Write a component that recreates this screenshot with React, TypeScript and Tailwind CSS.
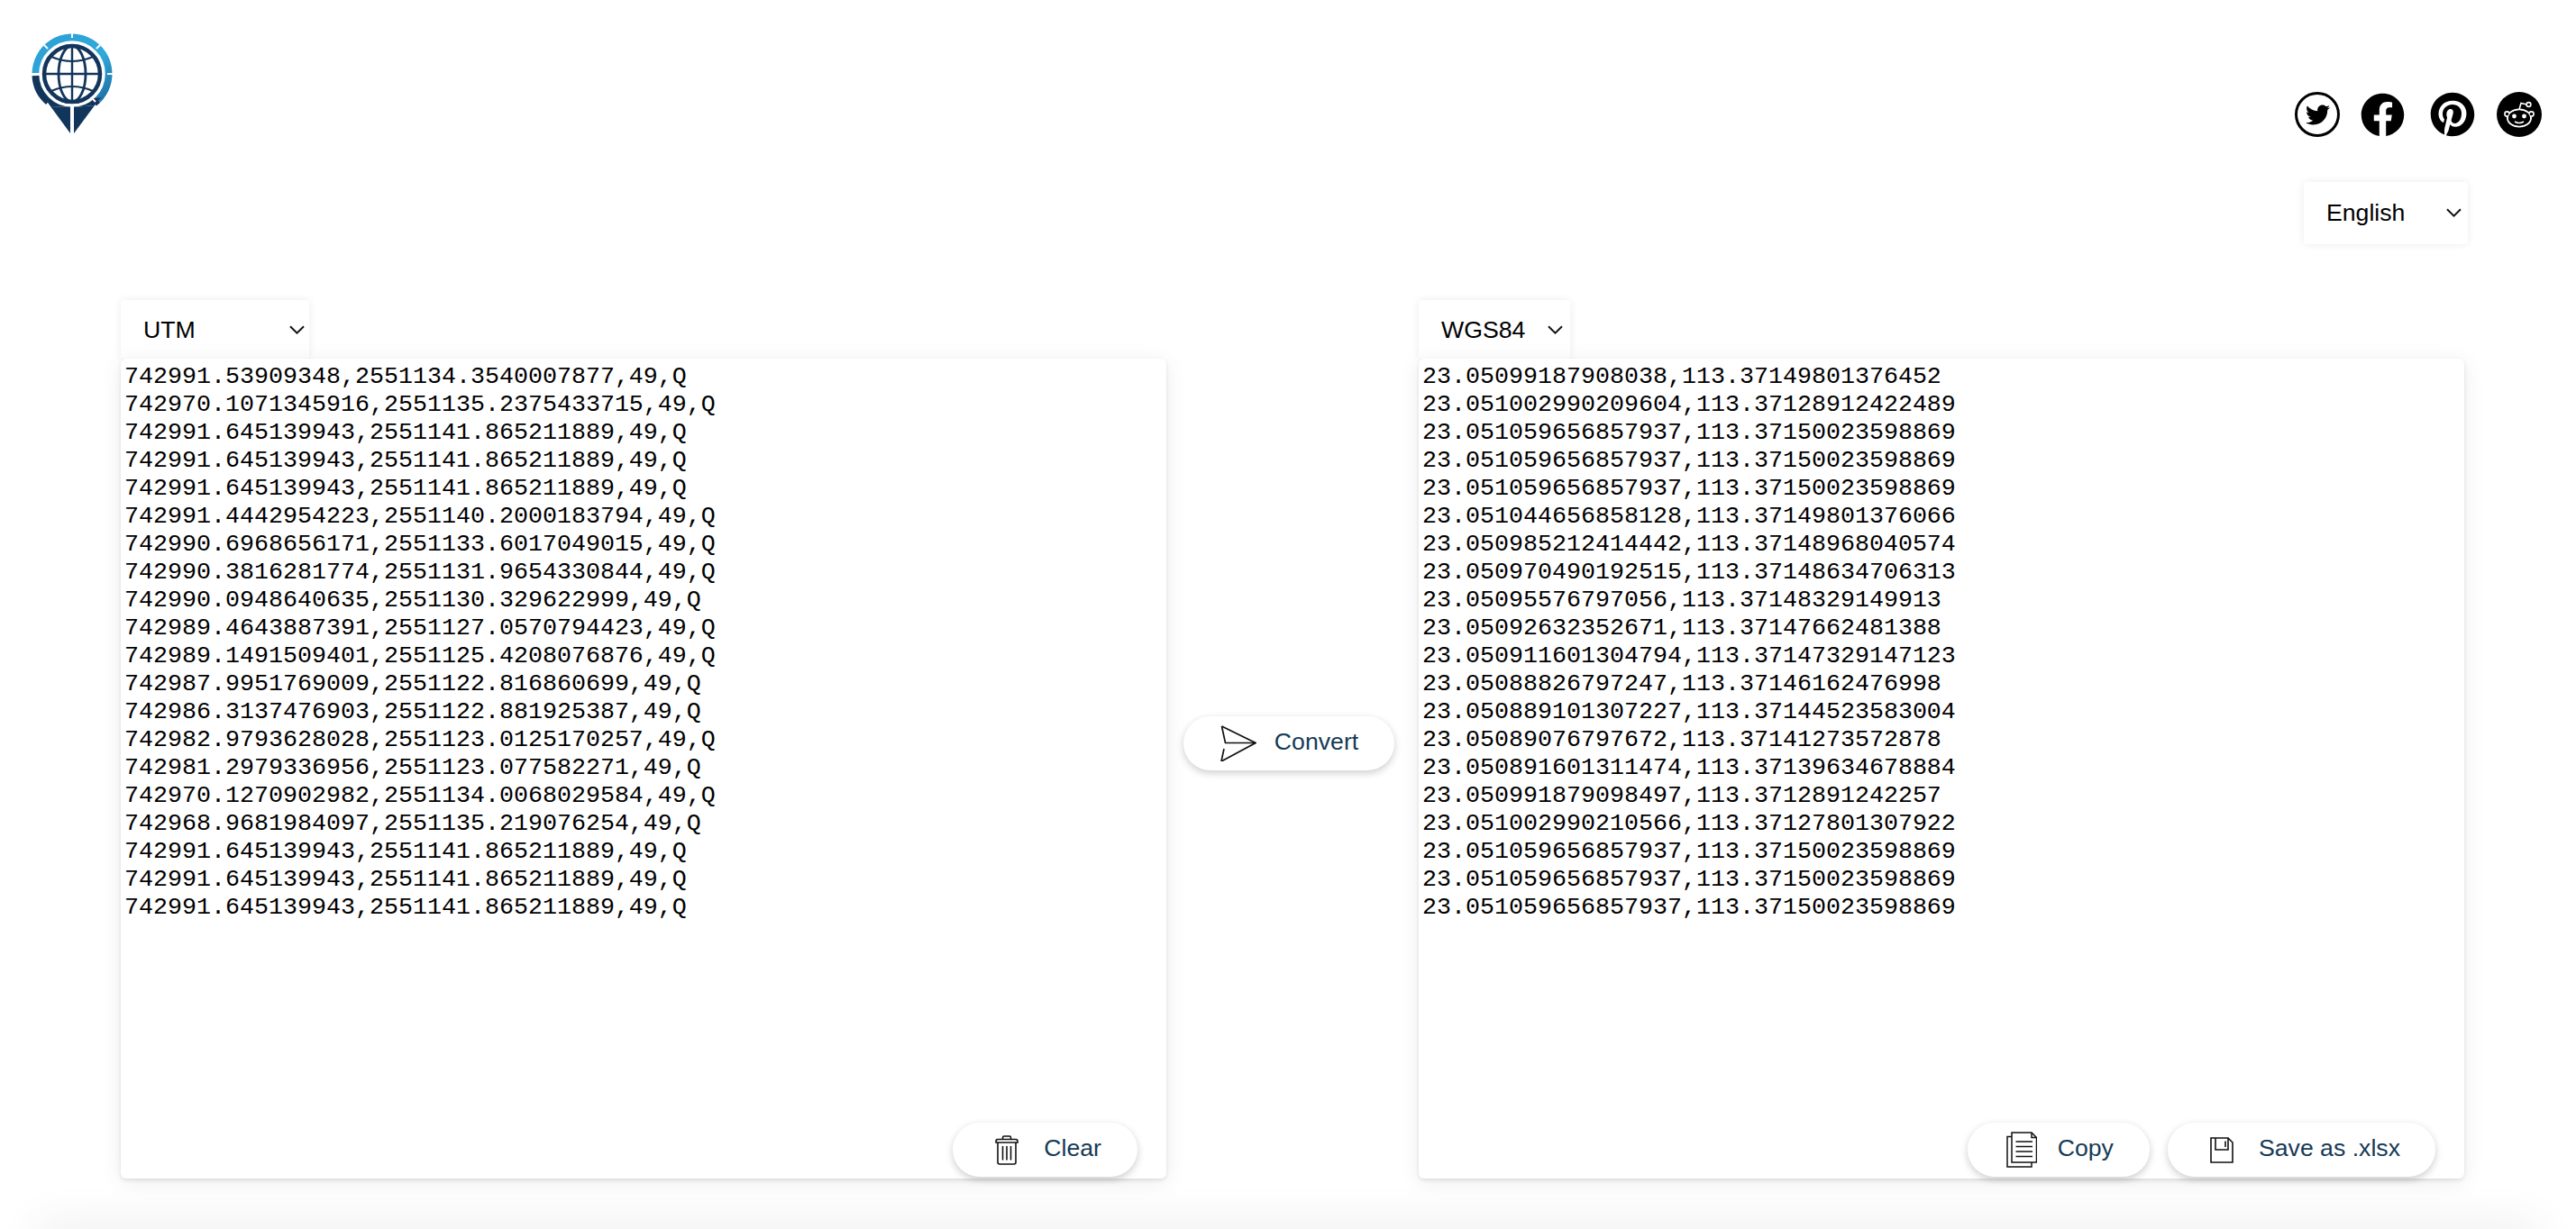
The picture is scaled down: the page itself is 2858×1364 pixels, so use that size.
import React from "react";
import { FaTwitter, FaFacebook, FaPinterest } from "react-icons/fa";

const LEFT = [
  "742991.53909348,2551134.3540007877,49,Q",
  "742970.1071345916,2551135.2375433715,49,Q",
  "742991.645139943,2551141.865211889,49,Q",
  "742991.645139943,2551141.865211889,49,Q",
  "742991.645139943,2551141.865211889,49,Q",
  "742991.4442954223,2551140.2000183794,49,Q",
  "742990.6968656171,2551133.6017049015,49,Q",
  "742990.3816281774,2551131.9654330844,49,Q",
  "742990.0948640635,2551130.329622999,49,Q",
  "742989.4643887391,2551127.0570794423,49,Q",
  "742989.1491509401,2551125.4208076876,49,Q",
  "742987.9951769009,2551122.816860699,49,Q",
  "742986.3137476903,2551122.881925387,49,Q",
  "742982.9793628028,2551123.0125170257,49,Q",
  "742981.2979336956,2551123.077582271,49,Q",
  "742970.1270902982,2551134.0068029584,49,Q",
  "742968.9681984097,2551135.219076254,49,Q",
  "742991.645139943,2551141.865211889,49,Q",
  "742991.645139943,2551141.865211889,49,Q",
  "742991.645139943,2551141.865211889,49,Q",
];

const RIGHT = [
  "23.05099187908038,113.37149801376452",
  "23.051002990209604,113.37128912422489",
  "23.051059656857937,113.37150023598869",
  "23.051059656857937,113.37150023598869",
  "23.051059656857937,113.37150023598869",
  "23.051044656858128,113.37149801376066",
  "23.050985212414442,113.37148968040574",
  "23.050970490192515,113.37148634706313",
  "23.05095576797056,113.37148329149913",
  "23.05092632352671,113.37147662481388",
  "23.050911601304794,113.37147329147123",
  "23.05088826797247,113.37146162476998",
  "23.050889101307227,113.37144523583004",
  "23.05089076797672,113.37141273572878",
  "23.050891601311474,113.37139634678884",
  "23.050991879098497,113.3712891242257",
  "23.051002990210566,113.37127801307922",
  "23.051059656857937,113.37150023598869",
  "23.051059656857937,113.37150023598869",
  "23.051059656857937,113.37150023598869",
];

function Logo() {
  const navy = "#12355b";
  return (
    <svg width="100" height="125" viewBox="30 30 100 125" fill="none">
      <defs>
        <linearGradient id="ring" x1="0" y1="0" x2="1" y2="1">
          <stop offset="0" stopColor="#2c9fd4" />
          <stop offset="0.6" stopColor="#30aadc" />
          <stop offset="1" stopColor="#1d6fa0" />
        </linearGradient>
      </defs>
      <path d="M40 81 A40 40 0 1 1 108.3 110.3" stroke="url(#ring)" strokeWidth="9" />
      <path d="M40 84 A40 40 0 0 0 54 112.5" stroke={navy} strokeWidth="9" />
      <path d="M108.3 110.3 L104 114" stroke={navy} strokeWidth="9" />
      <path d="M56 118 L78 148 L78 119 Z" fill={navy} />
      <path d="M82 119 L82 148 L105 117 Z" fill={navy} />
      <path d="M48 107 L56 118 L78 119 L78 114 Z" fill={navy} />
      <path d="M82 114 L82 119 L105 117 L112 108 Z" fill={navy} />
      <circle cx="80" cy="82" r="35" stroke="#fff" strokeWidth="3.5" />
      <path d="M80 36v6M49 50l4 4M111 50l-4 4M34 82h7M119 82h7M106 113l-3-3" stroke="#fff" strokeWidth="2" />
      <circle cx="80" cy="82" r="31" stroke={navy} strokeWidth="4.5" />
      <ellipse cx="80" cy="82" rx="15" ry="31" stroke={navy} strokeWidth="2.8" />
      <path d="M80 51v62M49 82h62" stroke={navy} strokeWidth="2.4" />
      <path d="M57 63q23 10 46 0M57 101q23-10 46 0" stroke={navy} strokeWidth="2.2" />
    </svg>
  );
}

function RedditIcon() {
  return (
    <svg width="50" height="50" viewBox="0 0 50 50" fill="none">
      <circle cx="25" cy="25" r="25" fill="#000" />
      <ellipse cx="25" cy="29" rx="13" ry="9.5" stroke="#fff" strokeWidth="2" />
      <circle cx="11.5" cy="24.5" r="2.6" stroke="#fff" strokeWidth="1.6" fill="#000" />
      <circle cx="38.5" cy="24.5" r="2.6" stroke="#fff" strokeWidth="1.6" fill="#000" />
      <ellipse cx="25" cy="29" rx="12" ry="8.5" fill="#000" />
      <circle cx="19.5" cy="27" r="2.4" fill="#fff" />
      <circle cx="30.5" cy="27" r="2.4" fill="#fff" />
      <path d="M20 33q5 3 10 0" stroke="#fff" strokeWidth="1.6" />
      <path d="M25 19.5 L27 12.5 L33.5 14" stroke="#fff" strokeWidth="1.6" />
      <circle cx="35.5" cy="14" r="2.4" stroke="#fff" strokeWidth="1.6" />
    </svg>
  );
}

function Chevron({ className }: { className?: string }) {
  return (
    <svg className={className} width="17" height="10" viewBox="0 0 17 10" fill="none">
      <path d="M1 1.2 L8.5 8.6 L16 1.2" stroke="#111" strokeWidth="2" />
    </svg>
  );
}

function PickerBox({ label, boxClass, chevronClass }: { label: string; boxClass: string; chevronClass: string }) {
  return (
    <div className={`flex items-center justify-between rounded bg-white pl-[25px] text-[26.667px] text-black shadow-[0_0_10px_rgba(0,0,0,0.08)] ${boxClass}`}>
      <span>{label}</span>
      <Chevron className={chevronClass} />
    </div>
  );
}

function SendIcon() {
  return (
    <svg width="40" height="40" viewBox="0 0 40 40" fill="none" stroke="#111" strokeWidth="1.7" strokeLinejoin="miter">
      <path d="M1.5 1 L39 19.5 L1 40 L4 26" />
      <path d="M5 19.5 H39 M1.5 1 L5.5 19.5" />
    </svg>
  );
}

function TrashIcon() {
  return (
    <svg width="26" height="33" viewBox="0 0 26 33" fill="none" stroke="#111" strokeWidth="1.6">
      <path d="M1 7 Q1 4.5 3 4.5 H23 Q25 4.5 25 7 V8 H1 Z" />
      <path d="M8.5 4.5 V2.5 Q8.5 1 10 1 H16 Q17.5 1 17.5 2.5 V4.5" />
      <path d="M3 8 V30 Q3 32 5 32 H21 Q23 32 23 30 V8" />
      <path d="M8.5 12 V27.5 M13 12 V27.5 M17.5 12 V27.5" />
    </svg>
  );
}

function CopyIcon() {
  return (
    <svg width="34" height="40" viewBox="0 0 34 40" fill="none" stroke="#111" strokeWidth="1.5">
      <path d="M6 5.5 H1 V39 H28 V34" />
      <path d="M6 1 H28 L33.5 6.5 V34 H6 Z" />
      <path d="M28 1 V6.5 H33.5" />
      <path d="M10.5 11 H29 M10.5 16.5 H29 M10.5 22 H29 M10.5 27.5 H29" />
    </svg>
  );
}

function SaveIcon() {
  return (
    <svg width="26" height="29" viewBox="0 0 26 29" fill="none" stroke="#111" strokeWidth="1.6">
      <path d="M1 1 H20 L25 6 V28 H1 Z" />
      <path d="M6 1 V14 H20 V1" />
      <path d="M17 4.5 V11" />
    </svg>
  );
}

function ActionButton({ icon, label, padding, gap }: { icon: React.ReactNode; label: string; padding: string; gap: string }) {
  return (
    <button className={`flex h-[60px] items-center rounded-full bg-white text-[26.667px] text-[#153a55] shadow-[0_3px_8px_rgba(0,0,0,0.2)] ${padding} ${gap}`}>
      {icon}
      <span className="pb-[4px]">{label}</span>
    </button>
  );
}

function Lines({ rows }: { rows: string[] }) {
  return (
    <div className="flex-1 pl-[4px] pt-[5px] font-['Liberation_Mono',monospace] text-[26.667px] leading-[31px] text-black">
      {rows.map((r, i) => (
        <div key={i}>{r}</div>
      ))}
    </div>
  );
}

const panel = "flex h-[910px] w-[1160px] flex-col rounded-[6px] bg-white shadow-[0_2px_4px_rgba(0,0,0,0.1),0_4px_24px_rgba(0,0,0,0.08)]";

export default function App() {
  return (
    <div className="flex h-[1364px] flex-col overflow-hidden bg-white font-['Liberation_Sans',Arial,sans-serif]">
      <header className="flex h-[333px] shrink-0 justify-between">
        <div className="ml-[30px] mt-[30px]">
          <Logo />
        </div>
        <div className="flex flex-col items-end pr-[38px] pt-[102px]">
          <div className="flex items-center">
            <div className="flex h-[50px] w-[50px] items-center justify-center rounded-full border-[3px] border-black text-black">
              <FaTwitter size={27} />
            </div>
            <FaFacebook size={49} className="ml-[23px] text-black" />
            <FaPinterest size={50} className="ml-[28px] text-black" />
            <div className="ml-[24px]">
              <RedditIcon />
            </div>
          </div>
          <div className="mr-[82px] mt-[50px]">
            <PickerBox label="English" boxClass="h-[69px] w-[182px] pb-[2px]" chevronClass="mr-[7px]" />
          </div>
        </div>
      </header>

      <main className="flex shrink-0 pl-[134px]">
        <section className="flex flex-col">
          <PickerBox label="UTM" boxClass="h-[65px] w-[209px]" chevronClass="mr-[5px]" />
          <div className={panel}>
            <Lines rows={LEFT} />
            <div className="mb-[2px] mr-[32px] flex justify-end">
              <ActionButton icon={<TrashIcon />} label="Clear" padding="pl-[47px] pr-[40px]" gap="gap-[28px]" />
            </div>
          </div>
        </section>

        <div className="mt-[9px] flex w-[280px] items-center justify-center pr-2">
          <ActionButton icon={<SendIcon />} label="Convert" padding="pl-[41px] pr-[40px]" gap="gap-[20px]" />
        </div>

        <section className="flex flex-col">
          <PickerBox label="WGS84" boxClass="h-[65px] w-[168px]" chevronClass="mr-[8px]" />
          <div className={panel}>
            <Lines rows={RIGHT} />
            <div className="mb-[2px] mr-[32px] flex justify-end gap-[20px]">
              <ActionButton icon={<CopyIcon />} label="Copy" padding="pl-[43px] pr-[40px]" gap="gap-[23px]" />
              <ActionButton icon={<SaveIcon />} label="Save as .xlsx" padding="pl-[47px] pr-[39px]" gap="gap-[28px]" />
            </div>
          </div>
        </section>
      </main>

      <footer className="mx-[40px] mt-[56px] h-[20px] shrink-0 bg-[#f7f7f7] shadow-[0_0_50px_rgba(0,0,0,0.12)]" />
    </div>
  );
}
